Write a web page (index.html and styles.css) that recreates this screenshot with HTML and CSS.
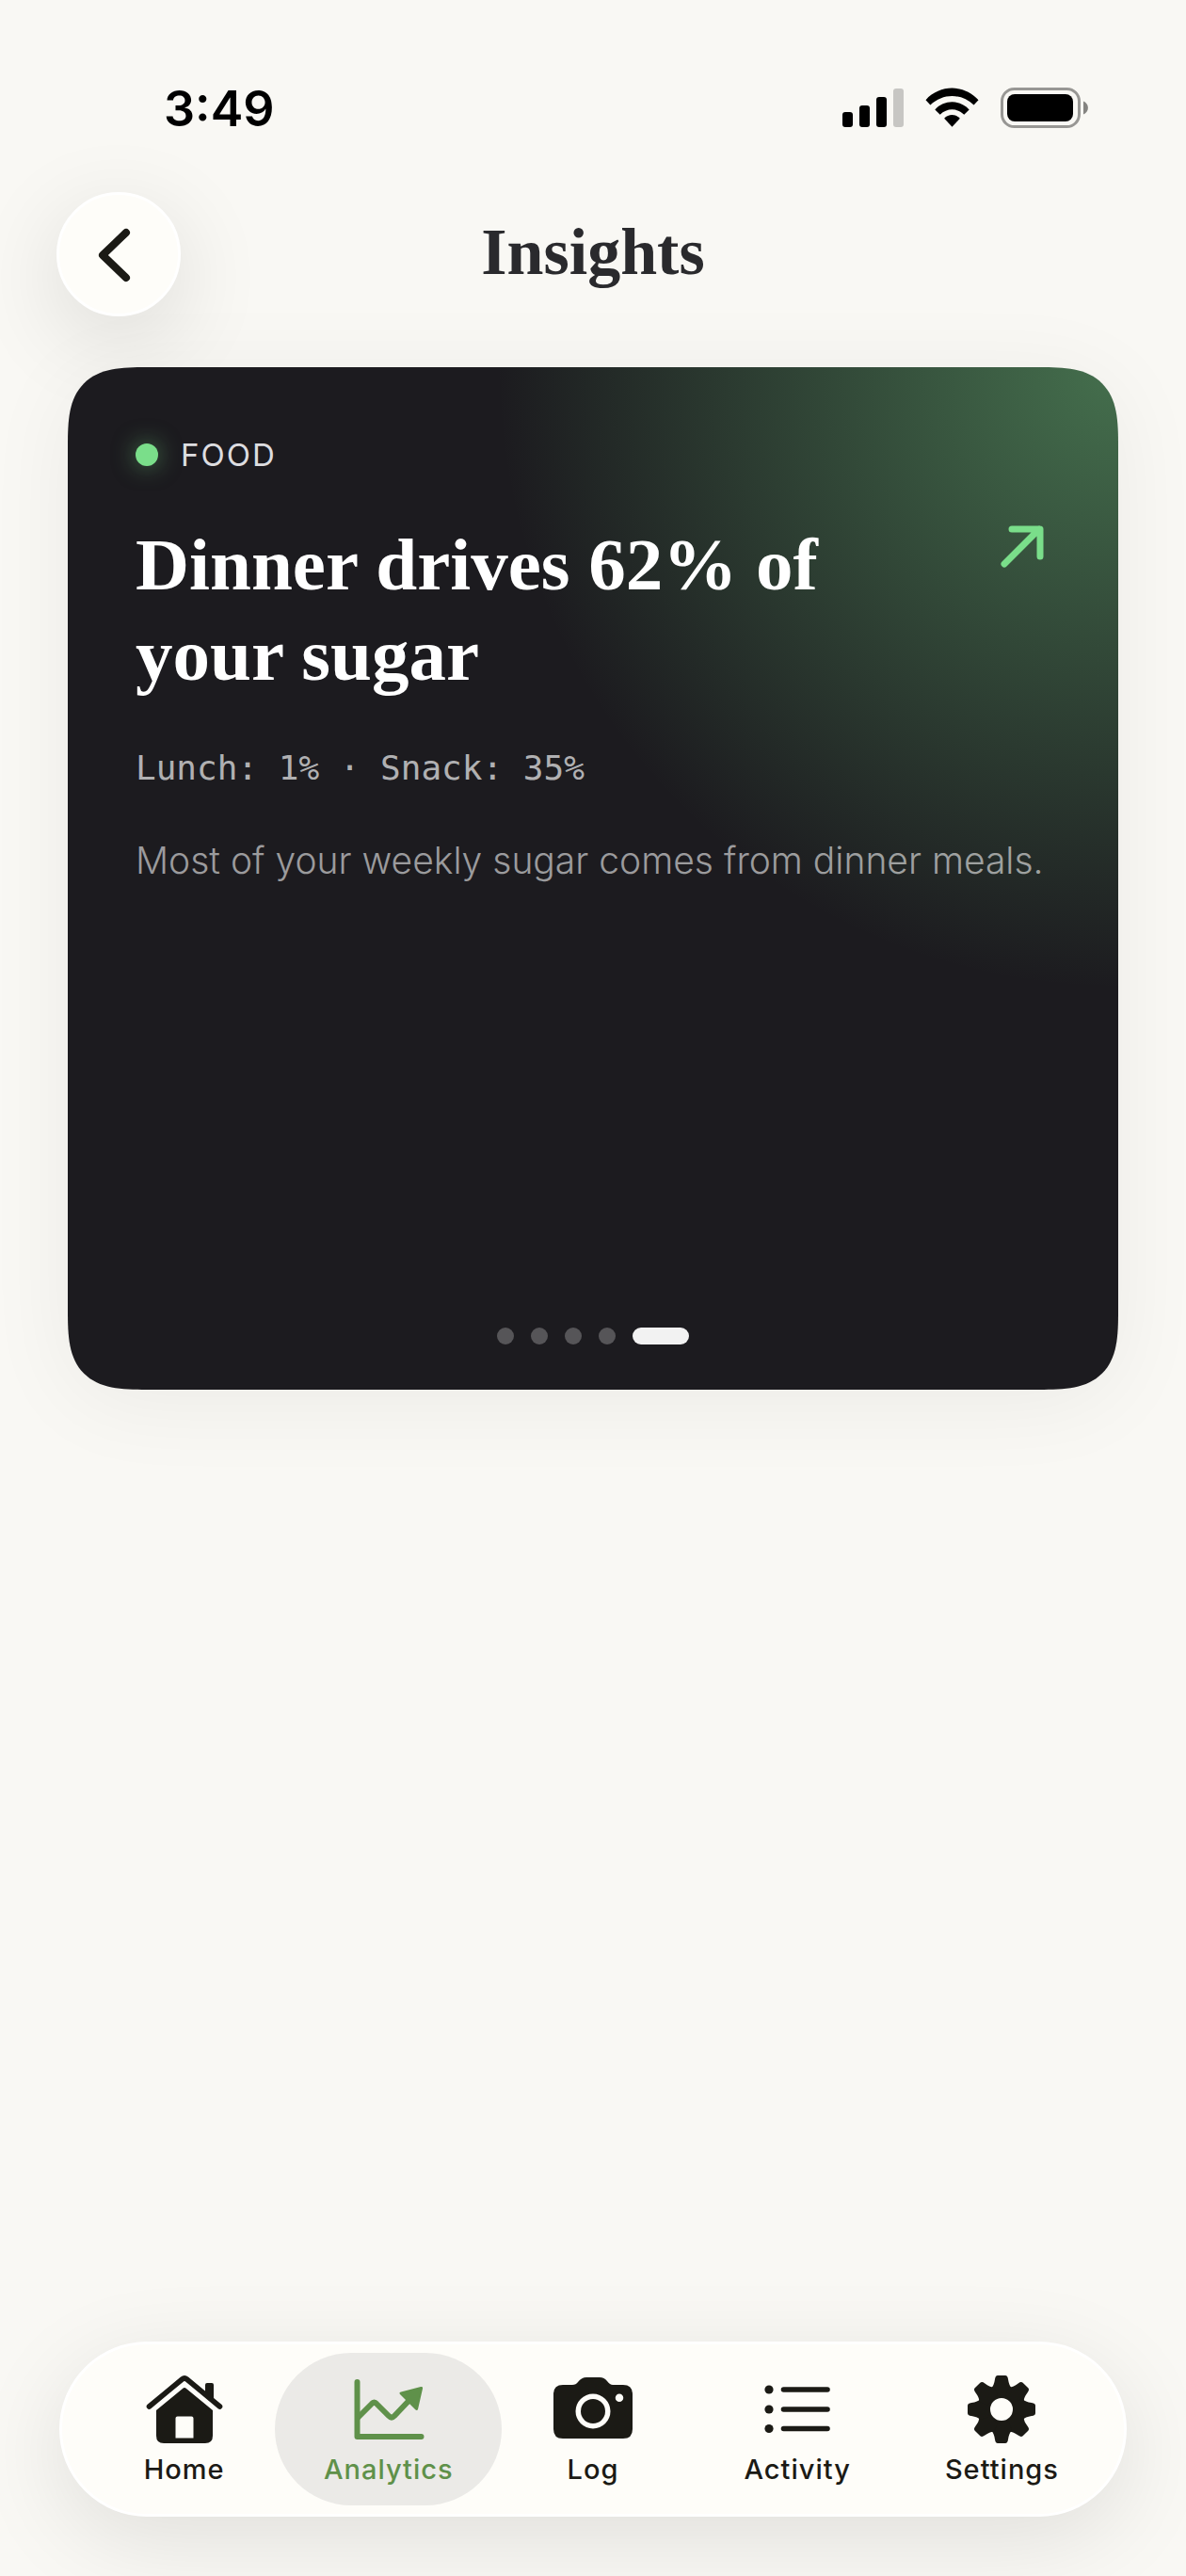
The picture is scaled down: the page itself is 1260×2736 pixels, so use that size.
FILE: index.html
```html
<!DOCTYPE html>
<html lang="en">
<head>
    <meta charset="utf-8" />
    <meta name="viewport" content="width=device-width, initial-scale=1" />
    <title>Insights</title>
    <link rel="stylesheet" href="styles.css">
</head>
<body>
    <div class="status">
        <span class="time">3:49</span>
        <div class="status-icons">
            <svg width="65" height="43" viewBox="0 0 65 43">
                <rect x="0" y="26" width="11" height="16" rx="3" />
                <rect x="18" y="19" width="11" height="23" rx="3" />
                <rect x="36" y="10" width="11" height="32" rx="3" />
                <rect x="54" y="1" width="11" height="41" rx="3" fill="#c7c6c3" />
            </svg>
            <svg width="57" height="43" viewBox="0 0 58 43">
                <path d="M0.5 13C16 -4 42 -4 57.500 13L52.500 18.500C39 5.500 19 5.500 5.500 18.500Z" />
                <path d="M10.500 23.500C20.500 12.500 37.500 12.500 47.500 23.500L42 29C34.500 21.500 23.500 21.500 16 29Z" />
                <path d="M20.500 33C25 28 33 28 37.500 33L29 42Z" />
            </svg>
            <svg width="93" height="43" viewBox="0 0 93 43">
                <rect x="1.500" y="1.500" width="82" height="40" rx="13" fill="none" stroke="#989794" stroke-width="3" />
                <rect x="7" y="7" width="70" height="29" rx="8" />
                <path d="M88 14.500C94.500 17 94.500 26 88 28.500Z" fill="#858481" />
            </svg>
        </div>
    </div>

    <header class="header">
        <button class="back" type="button" aria-label="Back">
            <svg width="60" height="60" viewBox="0 0 60 60">
                <path d="M38 7L13 31L38 55" fill="none" stroke="#1b1a15" stroke-width="8" stroke-linecap="round" stroke-linejoin="round" />
            </svg>
        </button>
        <h1>Insights</h1>
    </header>

    <main>
        <article class="card">
            <div class="tag"><span class="tag-dot"></span>FOOD</div>
            <div class="card-head">
                <h2>Dinner drives 62% of your sugar</h2>
                <svg class="arrow" width="60" height="60" viewBox="0 0 60 60">
                    <path d="M11 49L48 12M19 12H49V41" fill="none" stroke="#7ade8a" stroke-width="7" stroke-linecap="round" stroke-linejoin="round" />
                </svg>
            </div>
            <p class="stats">Lunch: 1% · Snack: 35%</p>
            <p class="text">Most of your weekly sugar comes from dinner meals.</p>
            <div class="dots">
                <span></span>
                <span></span>
                <span></span>
                <span></span>
                <span class="current"></span>
            </div>
        </article>
    </main>

    <nav class="tabs">
        <a href="#home">
            <svg viewBox="0 0 84 84">
                <path d="M64 26V16Q64 14 66 14H71Q73 14 73 16V36Z" />
                <path d="M4.500 39L39.500 10Q42 8 44.500 10L79.500 39" fill="none" stroke="currentColor" stroke-width="5.600" stroke-linecap="round" />
                <path fill-rule="evenodd" d="M40 20Q42 18 44 20L72 43V70Q72 78 64 78H20Q12 78 12 70V43ZM34.500 49.500Q32.500 49.500 32.500 51.500V72.500H51.500V51.500Q51.500 49.500 49.500 49.500Z" />
            </svg>
            Home
        </a>
        <a href="#analytics" class="active">
            <svg viewBox="0 0 84 84">
                <g fill="none" stroke="currentColor" stroke-width="6" stroke-linecap="round" stroke-linejoin="round">
                    <path d="M8.500 13V71H76.500" />
                    <path d="M9 51L24 36Q26.500 33 29 36L42 49Q45 52 48 49L66 30" stroke-linecap="butt" />
                </g>
                <path d="M55 23.500L76 18Q78.500 17.500 78 20L73 42Q72 44 70 42L54 26Q52.500 24 55 23.500Z" />
            </svg>
            Analytics
        </a>
        <a href="#log">
            <svg viewBox="0 0 84 84">
                <path fill-rule="evenodd" d="M10 16H20Q24 16 26 13Q30 8 35 8H49Q54 8 57 12Q60 16 63 16H74Q84 16 84 26V63Q84 73 74 73H10Q0 73 0 63V26Q0 16 10 16ZM42 25.500A18.500 18.500 0 1 0 42 62.500A18.500 18.500 0 1 0 42 25.500ZM70 25.500A4.200 4.200 0 1 0 70 34A4.200 4.200 0 1 0 70 25.500Z" />
                <circle cx="42" cy="44" r="13" />
            </svg>
            Log
        </a>
        <a href="#activity">
            <svg viewBox="0 0 84 84">
                <circle cx="12" cy="21" r="4.600" />
                <circle cx="12" cy="42" r="4.600" />
                <circle cx="12" cy="62.500" r="4.600" />
                <path d="M27.500 21H74M27.500 42H74M27.500 62.500H74" stroke="currentColor" stroke-width="5.600" stroke-linecap="round" />
            </svg>
            Activity
        </a>
        <a href="#settings">
            <svg viewBox="0 0 84 84">
                <defs>
                    <path id="tooth" d="M31 19.500Q34 17 35 10Q35.500 6 38 6H46Q48.500 6 49 10Q50 17 53 19.500L50 28H34Z" />
                </defs>
                <circle cx="42" cy="42" r="18.500" fill="none" stroke="currentColor" stroke-width="13" />
                <use href="#tooth" />
                <use href="#tooth" transform="rotate(45 42 42)" />
                <use href="#tooth" transform="rotate(90 42 42)" />
                <use href="#tooth" transform="rotate(135 42 42)" />
                <use href="#tooth" transform="rotate(180 42 42)" />
                <use href="#tooth" transform="rotate(225 42 42)" />
                <use href="#tooth" transform="rotate(270 42 42)" />
                <use href="#tooth" transform="rotate(315 42 42)" />
            </svg>
            Settings
        </a>
    </nav>
</body>
</html>
```
FILE: styles.css
```css
body, h1, h2, p {
    margin: 0;
    padding: 0;
}

* {
    box-sizing: border-box;
}

svg {
    display: block;
    flex: none;
}

body {
    display: flex;
    flex-direction: column;
    min-height: 100vh;
    background: #f9f8f4;
    color: #1b1a15;
    font-family: Inter, "Liberation Sans", sans-serif;
}

.status {
    display: flex;
    align-items: center;
    justify-content: space-between;
    padding: 86px 104px 0 174px;
    color: #000;
}

.time {
    font-size: 52px;
    font-weight: 600;
    line-height: 60px;
}

.status-icons {
    display: flex;
    gap: 23px;
    padding-bottom: 3px;
}

.header {
    display: grid;
    grid-template-columns: 132px 1fr 132px;
    align-items: center;
    margin-top: 58px;
    padding: 0 60px;
}

.header h1 {
    padding-bottom: 4px;
    font: bold 70px/84px "Liberation Serif", serif;
    color: #2a2a2d;
    text-align: center;
}

.back {
    display: flex;
    align-items: center;
    justify-content: center;
    width: 132px;
    height: 132px;
    padding: 0;
    border: 3px solid #fff;
    border-radius: 50%;
    background: #fefdf9;
    box-shadow: 0 24px 96px rgba(0, 0, 0, 0.12);
}

.card {
    display: flex;
    flex-direction: column;
    min-height: 1086px;
    margin: 54px 72px 0;
    padding: 72px 72px 48px;
    border-radius: 60px;
    background: radial-gradient(circle 660px at top right, rgba(122, 222, 138, 0.43), rgba(122, 222, 138, 0)) #1c1b1f;
    box-shadow: 0 12px 96px rgba(0, 0, 0, 0.06);
}

@supports (corner-shape: superellipse(1.6)) {
    .card {
        border-radius: 84px;
        corner-shape: superellipse(1.6);
    }
}

.tag {
    display: flex;
    align-items: center;
    gap: 24px;
    font-size: 33px;
    line-height: 42px;
    letter-spacing: 2px;
    color: #dddde0;
}

.tag-dot {
    width: 24px;
    height: 24px;
    border-radius: 50%;
    background: #7ade8a;
    box-shadow: 0 0 24px rgba(122, 222, 138, 0.5);
}

.card-head {
    display: flex;
    justify-content: space-between;
    gap: 48px;
    margin-top: 48px;
}

.arrow {
    margin-top: -2px;
}

.card h2 {
    font: bold 79px/96px "Liberation Serif", serif;
    color: #fff;
}

.stats {
    margin-top: 48px;
    font: 36px/48px "DejaVu Sans Mono", monospace;
    color: rgba(255, 255, 255, 0.68);
}

.text {
    margin-top: 44px;
    font-size: 39px;
    font-weight: 300;
    line-height: 60px;
    color: rgba(255, 255, 255, 0.57);
}

.dots {
    display: flex;
    justify-content: center;
    gap: 18px;
    margin-top: auto;
}

.dots span {
    width: 18px;
    height: 18px;
    border-radius: 9px;
    background: #565558;
}

.dots .current {
    width: 60px;
    background: #f2f2f2;
}

.tabs {
    display: flex;
    margin: auto 63px 63px;
    padding: 9px;
    border: 3px solid #fff;
    border-radius: 93px;
    background: #fefdf9;
    box-shadow: 0 24px 96px rgba(0, 0, 0, 0.1);
}

.tabs a {
    display: flex;
    flex: 1 1 0;
    flex-direction: column;
    align-items: center;
    padding: 18px 0 16px;
    border-radius: 81px;
    font-size: 29px;
    font-weight: 500;
    line-height: 44px;
    letter-spacing: 1px;
    color: #1b1a15;
    text-decoration: none;
}

/* neighbouring pills share 24px */
.tabs a + a {
    margin-left: -24px;
}

.tabs svg {
    width: 84px;
    height: 84px;
    fill: currentColor;
}

.tabs .active {
    background: #ebeae7;
    color: #5f914a;
}
```
